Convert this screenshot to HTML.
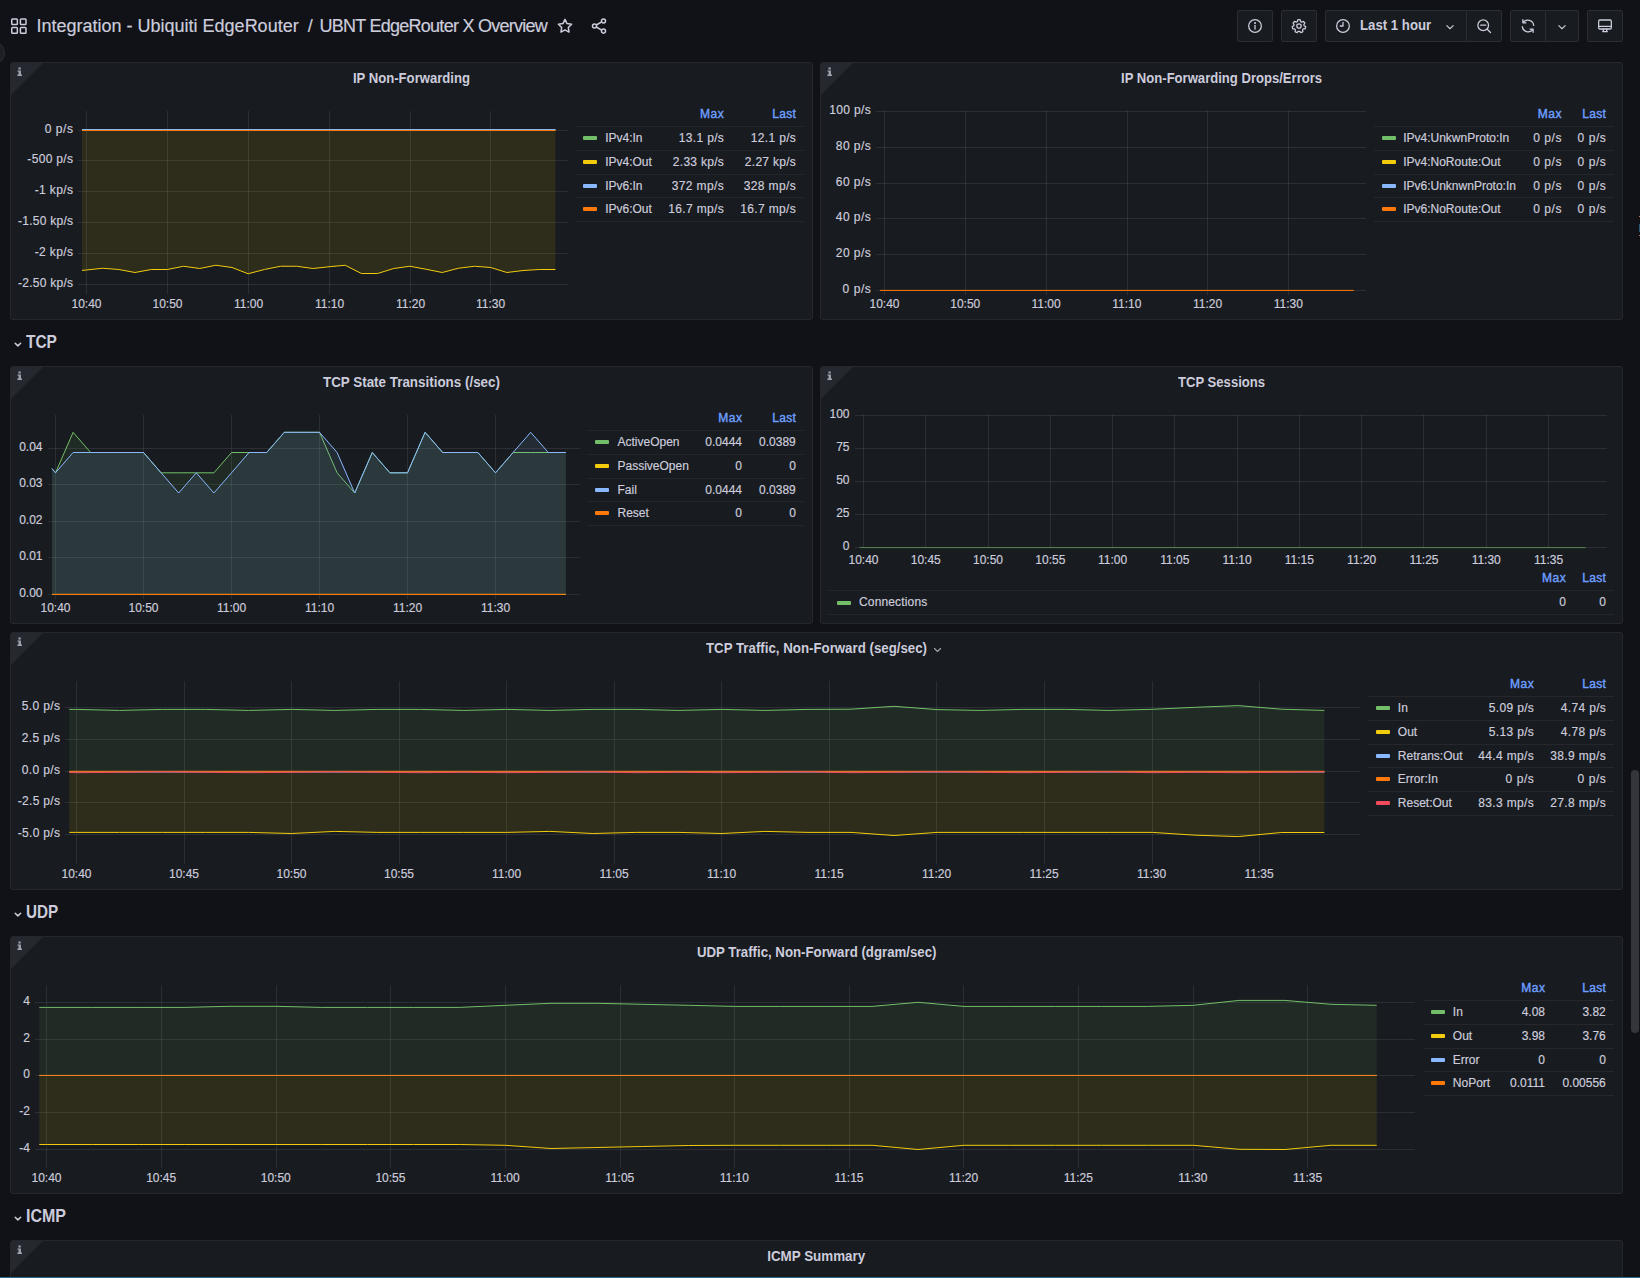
<!DOCTYPE html>
<html lang="en"><head><meta charset="utf-8"><title>UBNT EdgeRouter X Overview - Grafana</title>
<style>
html,body{margin:0;padding:0}
body{width:1640px;height:1278px;overflow:hidden;position:relative;background:#111217;font-family:"Liberation Sans",sans-serif;color:#ccccdc}
.t{position:absolute;white-space:nowrap;-webkit-text-stroke:0.18px currentColor}
.p{position:absolute;background:#181b1f;border:1px solid #25272c;border-radius:3px;overflow:hidden}
.c{position:absolute;left:0;top:0;width:0;height:0;border-top:32px solid #25282f;border-right:32px solid transparent}
.ii{position:absolute;left:5.5px;top:4px}
.hl{position:absolute;height:1px;background:#25272c}
.sw{position:absolute;width:14px;height:4px;border-radius:1px}
.g{position:absolute;left:0;top:0;pointer-events:none}
.b{position:absolute;top:10px;height:30px;background:#181b1f;border:1px solid #2a2d33;border-radius:2px}
.ic{position:absolute}
</style></head><body>

<div style="position:absolute;left:-19px;top:41px;width:22px;height:22px;border-radius:50%;background:#1b1e24;border:1px solid #2a2d33"></div>
<svg class="ic" style="left:10px;top:17px" width="18" height="18" viewBox="0 0 18 18" fill="none" stroke="#ccccdc" stroke-width="1.5"><rect x="1.75" y="2" width="5.6" height="5.6" rx="0.8"/><rect x="10.4" y="2" width="5.6" height="5.6" rx="0.8"/><rect x="1.75" y="10.6" width="5.6" height="5.6" rx="0.8"/><rect x="10.4" y="10.6" width="5.6" height="5.6" rx="0.8"/></svg>
<div class="t" style="left:36.50px;top:13.10px;font-size:18px;line-height:27px;color:#ccccdc;">Integration - Ubiquiti EdgeRouter</div>
<div class="t" style="left:307.80px;top:13.10px;font-size:18px;line-height:27px;color:#ccccdc;">/</div>
<div class="t" style="left:319.50px;top:13.10px;font-size:18px;line-height:27px;color:#ccccdc;letter-spacing:-0.739px;">UBNT EdgeRouter X Overview</div>
<svg class="ic" style="left:556px;top:17px" width="18" height="18" viewBox="0 0 24 24" fill="none" stroke="#ccccdc" stroke-width="2" stroke-linejoin="round"><path d="M12 3.2l2.7 5.6 6.1.9-4.4 4.3 1 6.1L12 17.2l-5.4 2.9 1-6.1L3.2 9.7l6.1-.9z"/></svg>
<svg class="ic" style="left:590px;top:17px" width="18" height="18" viewBox="0 0 24 24" fill="none" stroke="#ccccdc" stroke-width="2"><circle cx="18" cy="5.2" r="2.7"/><circle cx="6" cy="12" r="2.7"/><circle cx="18" cy="18.8" r="2.7"/><path d="M8.4 10.7l7.2-4.1M8.4 13.3l7.2 4.1"/></svg>
<div class="b" style="left:1237px;width:34px;border-radius:2px 2px 2px 2px"></div>
<div class="b" style="left:1281px;width:34px;border-radius:2px 2px 2px 2px"></div>
<div class="b" style="left:1325px;width:140px;border-radius:2px 0 0 2px"></div>
<div class="b" style="left:1466px;width:34px;border-radius:0 2px 2px 0"></div>
<div class="b" style="left:1510px;width:34px;border-radius:2px 0 0 2px"></div>
<div class="b" style="left:1545px;width:32px;border-radius:0 2px 2px 0"></div>
<div class="b" style="left:1587px;width:34px;border-radius:2px 2px 2px 2px"></div>
<svg class="ic" style="left:1247px;top:18px" width="16" height="16" viewBox="0 0 24 24" fill="none" stroke="#ccccdc" stroke-width="1.9" stroke-linecap="round" stroke-linejoin="round"><circle cx="12" cy="12" r="9.5"/><path d="M12 11.2v5.6"/><circle cx="12" cy="7.6" r="0.6" fill="#ccccdc"/></svg>
<svg class="ic" style="left:1291px;top:18px" width="16" height="16" viewBox="0 0 24 24" fill="none" stroke="#ccccdc" stroke-width="1.9" stroke-linecap="round" stroke-linejoin="round"><circle cx="12" cy="12" r="3.3"/><path d="M10.3 2.6h3.4l.6 2.7 1.7.9 2.5-1.2 2.3 2.5-1.5 2.3.4 1.9 2.4 1.3-.8 3.3-2.8.1-1.2 1.5.5 2.7-3.1 1.4-1.8-2.1h-1.9l-1.8 2.1-3.1-1.4.5-2.7-1.2-1.5-2.8-.1-.8-3.3 2.4-1.3.4-1.9-1.5-2.3 2.3-2.5 2.5 1.2 1.7-.9z"/></svg>
<svg class="ic" style="left:1335px;top:18px" width="16" height="16" viewBox="0 0 24 24" fill="none" stroke="#ccccdc" stroke-width="1.9" stroke-linecap="round" stroke-linejoin="round"><circle cx="12" cy="12" r="9.5"/><path d="M12 6.5V12H7.8"/></svg>
<div class="t" style="left:1360.30px;top:15.30px;font-size:14px;line-height:21px;color:#ccccdc;font-weight:700;-webkit-text-stroke:0;transform:scaleX(0.9436);transform-origin:0 50%;">Last 1 hour</div>
<svg class="ic" style="left:1443px;top:20px" width="14" height="14" viewBox="0 0 24 24" fill="none" stroke="#ccccdc" stroke-width="1.9" stroke-linecap="round" stroke-linejoin="round"><path d="M6.5 9.5l5.5 5.5 5.5-5.5"/></svg>
<svg class="ic" style="left:1476px;top:18px" width="16" height="16" viewBox="0 0 24 24" fill="none" stroke="#ccccdc" stroke-width="1.9" stroke-linecap="round" stroke-linejoin="round"><circle cx="10.8" cy="10.8" r="8"/><path d="M16.8 16.8l5 5M7 10.8h7.6"/></svg>
<svg class="ic" style="left:1520px;top:18px" width="16" height="16" viewBox="0 0 24 24" fill="none" stroke="#ccccdc" stroke-width="1.9" stroke-linecap="round" stroke-linejoin="round"><path d="M20.5 11a8.7 8.7 0 0 0-15.6-4.3M4.3 2.6v4.6h4.6M3.5 13a8.7 8.7 0 0 0 15.6 4.3M19.7 21.4v-4.6h-4.6"/></svg>
<svg class="ic" style="left:1555px;top:20px" width="14" height="14" viewBox="0 0 24 24" fill="none" stroke="#ccccdc" stroke-width="1.9" stroke-linecap="round" stroke-linejoin="round"><path d="M6.5 9.5l5.5 5.5 5.5-5.5"/></svg>
<svg class="ic" style="left:1597px;top:18px" width="16" height="16" viewBox="0 0 24 24" fill="none" stroke="#ccccdc" stroke-width="1.9" stroke-linecap="round" stroke-linejoin="round"><rect x="2.5" y="3" width="19" height="13.5" rx="2"/><path d="M2.5 12.5h19M8.5 20.5h7M9.5 16.5v4M14.5 16.5v4"/></svg>
<div class="p" style="left:10px;top:62px;width:801px;height:256px"><i class="c"></i><svg class="ii" width="5.4" height="9.4" viewBox="0 0 6 10"><path d="M1.6 0.2h2.6v2.3H1.6zM0.6 3.6h3.8v4.6h1.2v1.6H0.4V8.2h1.3V5.1H0.6z" fill="#9fa1ae"/></svg></div>
<div class="p" style="left:820px;top:62px;width:801px;height:256px"><i class="c"></i><svg class="ii" width="5.4" height="9.4" viewBox="0 0 6 10"><path d="M1.6 0.2h2.6v2.3H1.6zM0.6 3.6h3.8v4.6h1.2v1.6H0.4V8.2h1.3V5.1H0.6z" fill="#9fa1ae"/></svg></div>
<div class="p" style="left:10px;top:366px;width:801px;height:256px"><i class="c"></i><svg class="ii" width="5.4" height="9.4" viewBox="0 0 6 10"><path d="M1.6 0.2h2.6v2.3H1.6zM0.6 3.6h3.8v4.6h1.2v1.6H0.4V8.2h1.3V5.1H0.6z" fill="#9fa1ae"/></svg></div>
<div class="p" style="left:820px;top:366px;width:801px;height:256px"><i class="c"></i><svg class="ii" width="5.4" height="9.4" viewBox="0 0 6 10"><path d="M1.6 0.2h2.6v2.3H1.6zM0.6 3.6h3.8v4.6h1.2v1.6H0.4V8.2h1.3V5.1H0.6z" fill="#9fa1ae"/></svg></div>
<div class="p" style="left:10px;top:632px;width:1611px;height:256px"><i class="c"></i><svg class="ii" width="5.4" height="9.4" viewBox="0 0 6 10"><path d="M1.6 0.2h2.6v2.3H1.6zM0.6 3.6h3.8v4.6h1.2v1.6H0.4V8.2h1.3V5.1H0.6z" fill="#9fa1ae"/></svg></div>
<div class="p" style="left:10px;top:936px;width:1611px;height:256px"><i class="c"></i><svg class="ii" width="5.4" height="9.4" viewBox="0 0 6 10"><path d="M1.6 0.2h2.6v2.3H1.6zM0.6 3.6h3.8v4.6h1.2v1.6H0.4V8.2h1.3V5.1H0.6z" fill="#9fa1ae"/></svg></div>
<div class="p" style="left:10px;top:1240px;width:1611px;height:58px"><i class="c"></i><svg class="ii" width="5.4" height="9.4" viewBox="0 0 6 10"><path d="M1.6 0.2h2.6v2.3H1.6zM0.6 3.6h3.8v4.6h1.2v1.6H0.4V8.2h1.3V5.1H0.6z" fill="#9fa1ae"/></svg></div>
<svg class="ic" style="left:12px;top:337.5px" width="12" height="12" viewBox="0 0 12 12" fill="none" stroke="#ccccdc" stroke-width="1.5" stroke-linecap="round" stroke-linejoin="round"><path d="M3.2 5.2l2.7 2.7 2.7-2.7"/></svg>
<div class="t" style="left:26.20px;top:328.90px;font-size:18px;line-height:27px;color:#ccccdc;font-weight:700;-webkit-text-stroke:0;transform:scaleX(0.8583);transform-origin:0 50%;">TCP</div>
<svg class="ic" style="left:12px;top:907.5px" width="12" height="12" viewBox="0 0 12 12" fill="none" stroke="#ccccdc" stroke-width="1.5" stroke-linecap="round" stroke-linejoin="round"><path d="M3.2 5.2l2.7 2.7 2.7-2.7"/></svg>
<div class="t" style="left:26.20px;top:898.90px;font-size:18px;line-height:27px;color:#ccccdc;font-weight:700;-webkit-text-stroke:0;transform:scaleX(0.8447);transform-origin:0 50%;">UDP</div>
<svg class="ic" style="left:12px;top:1211.7px" width="12" height="12" viewBox="0 0 12 12" fill="none" stroke="#ccccdc" stroke-width="1.5" stroke-linecap="round" stroke-linejoin="round"><path d="M3.2 5.2l2.7 2.7 2.7-2.7"/></svg>
<div class="t" style="left:26.20px;top:1203.10px;font-size:18px;line-height:27px;color:#ccccdc;font-weight:700;-webkit-text-stroke:0;transform:scaleX(0.8889);transform-origin:0 50%;">ICMP</div>
<div class="t" style="left:349.02px;top:67.50px;font-size:14px;line-height:21px;color:#ccccdc;font-weight:700;-webkit-text-stroke:0;transform:scaleX(0.9363);transform-origin:50% 50%;">IP Non-Forwarding</div>
<div class="t" style="left:1113.90px;top:67.50px;font-size:14px;line-height:21px;color:#ccccdc;font-weight:700;-webkit-text-stroke:0;transform:scaleX(0.9340);transform-origin:50% 50%;">IP Non-Forwarding Drops/Errors</div>
<div class="t" style="left:319.05px;top:371.50px;font-size:14px;line-height:21px;color:#ccccdc;font-weight:700;-webkit-text-stroke:0;transform:scaleX(0.9573);transform-origin:50% 50%;">TCP State Transitions (/sec)</div>
<div class="t" style="left:1174.95px;top:371.50px;font-size:14px;line-height:21px;color:#ccccdc;font-weight:700;-webkit-text-stroke:0;transform:scaleX(0.9344);transform-origin:50% 50%;">TCP Sessions</div>
<div class="t" style="left:706.20px;top:637.50px;font-size:14px;line-height:21px;color:#ccccdc;font-weight:700;-webkit-text-stroke:0;transform:scaleX(0.9480);transform-origin:0 50%;">TCP Traffic, Non-Forward (seg/sec)</div>
<svg class="ic" style="left:931px;top:644px" width="12" height="12" viewBox="0 0 12 12" fill="none" stroke="#a3a4b0" stroke-width="1.1" stroke-linecap="round" stroke-linejoin="round"><path d="M3.5 4.5l3 3 3-3"/></svg>
<div class="t" style="left:689.83px;top:941.50px;font-size:14px;line-height:21px;color:#ccccdc;font-weight:700;-webkit-text-stroke:0;transform:scaleX(0.9454);transform-origin:50% 50%;">UDP Traffic, Non-Forward (dgram/sec)</div>
<div class="t" style="left:764.78px;top:1245.50px;font-size:14px;line-height:21px;color:#ccccdc;font-weight:700;-webkit-text-stroke:0;transform:scaleX(0.9566);transform-origin:50% 50%;">ICMP Summary</div>
<div class="t" style="left:71.49px;top:294.50px;font-size:12px;line-height:18px;color:#ccccdc;">10:40</div>
<div class="t" style="left:152.49px;top:294.50px;font-size:12px;line-height:18px;color:#ccccdc;">10:50</div>
<div class="t" style="left:233.93px;top:294.50px;font-size:12px;line-height:18px;color:#ccccdc;">11:00</div>
<div class="t" style="left:314.93px;top:294.50px;font-size:12px;line-height:18px;color:#ccccdc;">11:10</div>
<div class="t" style="left:395.93px;top:294.50px;font-size:12px;line-height:18px;color:#ccccdc;">11:20</div>
<div class="t" style="left:475.93px;top:294.50px;font-size:12px;line-height:18px;color:#ccccdc;">11:30</div>
<div class="t" style="left:44.68px;top:120.00px;font-size:12px;line-height:18px;color:#ccccdc;letter-spacing:0.575px;">0 p/s</div>
<div class="t" style="left:27.34px;top:150.00px;font-size:12px;line-height:18px;color:#ccccdc;letter-spacing:0.329px;">-500 p/s</div>
<div class="t" style="left:34.69px;top:181.00px;font-size:12px;line-height:18px;color:#ccccdc;letter-spacing:0.383px;">-1 kp/s</div>
<div class="t" style="left:18.01px;top:212.00px;font-size:12px;line-height:18px;color:#ccccdc;letter-spacing:0.256px;">-1.50 kp/s</div>
<div class="t" style="left:34.69px;top:243.00px;font-size:12px;line-height:18px;color:#ccccdc;letter-spacing:0.383px;">-2 kp/s</div>
<div class="t" style="left:18.01px;top:274.00px;font-size:12px;line-height:18px;color:#ccccdc;letter-spacing:0.256px;">-2.50 kp/s</div>
<div class="t" style="left:700.10px;top:105.00px;font-size:12px;line-height:18px;color:#6e9fff;letter-spacing:0.515px;-webkit-text-stroke:0.4px currentColor;">Max</div>
<div class="t" style="left:772.30px;top:105.00px;font-size:12px;line-height:18px;color:#6e9fff;letter-spacing:0.273px;-webkit-text-stroke:0.4px currentColor;">Last</div>
<div class="hl" style="left:575px;top:126px;width:229px"></div>
<div class="hl" style="left:575px;top:150px;width:229px"></div>
<div class="hl" style="left:575px;top:174px;width:229px"></div>
<div class="hl" style="left:575px;top:197px;width:229px"></div>
<div class="hl" style="left:575px;top:221px;width:229px"></div>
<div class="sw" style="left:583px;top:136.00px;background:#73bf69"></div>
<div class="t" style="left:605.20px;top:128.75px;font-size:12px;line-height:18px;color:#ccccdc;">IPv4:In</div>
<div class="t" style="left:678.80px;top:128.75px;font-size:12px;line-height:18px;color:#ccccdc;letter-spacing:0.329px;">13.1 p/s</div>
<div class="t" style="left:750.80px;top:128.75px;font-size:12px;line-height:18px;color:#ccccdc;letter-spacing:0.329px;">12.1 p/s</div>
<div class="sw" style="left:583px;top:160.00px;background:#f2cc0c"></div>
<div class="t" style="left:605.20px;top:152.75px;font-size:12px;line-height:18px;color:#ccccdc;">IPv4:Out</div>
<div class="t" style="left:672.80px;top:152.75px;font-size:12px;line-height:18px;color:#ccccdc;letter-spacing:0.287px;">2.33 kp/s</div>
<div class="t" style="left:744.80px;top:152.75px;font-size:12px;line-height:18px;color:#ccccdc;letter-spacing:0.287px;">2.27 kp/s</div>
<div class="sw" style="left:583px;top:184.00px;background:#8ab8ff"></div>
<div class="t" style="left:605.20px;top:176.75px;font-size:12px;line-height:18px;color:#ccccdc;">IPv6:In</div>
<div class="t" style="left:671.64px;top:176.75px;font-size:12px;line-height:18px;color:#ccccdc;letter-spacing:0.400px;">372 mp/s</div>
<div class="t" style="left:743.64px;top:176.75px;font-size:12px;line-height:18px;color:#ccccdc;letter-spacing:0.400px;">328 mp/s</div>
<div class="sw" style="left:583px;top:207.00px;background:#ff780a"></div>
<div class="t" style="left:605.20px;top:199.75px;font-size:12px;line-height:18px;color:#ccccdc;">IPv6:Out</div>
<div class="t" style="left:668.31px;top:199.75px;font-size:12px;line-height:18px;color:#ccccdc;letter-spacing:0.350px;">16.7 mp/s</div>
<div class="t" style="left:740.31px;top:199.75px;font-size:12px;line-height:18px;color:#ccccdc;letter-spacing:0.350px;">16.7 mp/s</div>
<div class="t" style="left:869.49px;top:294.50px;font-size:12px;line-height:18px;color:#ccccdc;">10:40</div>
<div class="t" style="left:950.24px;top:294.50px;font-size:12px;line-height:18px;color:#ccccdc;">10:50</div>
<div class="t" style="left:1031.43px;top:294.50px;font-size:12px;line-height:18px;color:#ccccdc;">11:00</div>
<div class="t" style="left:1112.18px;top:294.50px;font-size:12px;line-height:18px;color:#ccccdc;">11:10</div>
<div class="t" style="left:1192.93px;top:294.50px;font-size:12px;line-height:18px;color:#ccccdc;">11:20</div>
<div class="t" style="left:1273.68px;top:294.50px;font-size:12px;line-height:18px;color:#ccccdc;">11:30</div>
<div class="t" style="left:829.14px;top:101.00px;font-size:12px;line-height:18px;color:#ccccdc;letter-spacing:0.383px;">100 p/s</div>
<div class="t" style="left:835.81px;top:137.00px;font-size:12px;line-height:18px;color:#ccccdc;letter-spacing:0.460px;">80 p/s</div>
<div class="t" style="left:835.81px;top:173.00px;font-size:12px;line-height:18px;color:#ccccdc;letter-spacing:0.460px;">60 p/s</div>
<div class="t" style="left:835.81px;top:208.00px;font-size:12px;line-height:18px;color:#ccccdc;letter-spacing:0.460px;">40 p/s</div>
<div class="t" style="left:835.81px;top:244.00px;font-size:12px;line-height:18px;color:#ccccdc;letter-spacing:0.460px;">20 p/s</div>
<div class="t" style="left:842.48px;top:280.00px;font-size:12px;line-height:18px;color:#ccccdc;letter-spacing:0.575px;">0 p/s</div>
<div class="t" style="left:1537.80px;top:105.00px;font-size:12px;line-height:18px;color:#6e9fff;letter-spacing:0.515px;-webkit-text-stroke:0.4px currentColor;">Max</div>
<div class="t" style="left:1582.30px;top:105.00px;font-size:12px;line-height:18px;color:#6e9fff;letter-spacing:0.273px;-webkit-text-stroke:0.4px currentColor;">Last</div>
<div class="hl" style="left:1374px;top:126px;width:240px"></div>
<div class="hl" style="left:1374px;top:150px;width:240px"></div>
<div class="hl" style="left:1374px;top:174px;width:240px"></div>
<div class="hl" style="left:1374px;top:197px;width:240px"></div>
<div class="hl" style="left:1374px;top:221px;width:240px"></div>
<div class="sw" style="left:1382px;top:136.00px;background:#73bf69"></div>
<div class="t" style="left:1403.20px;top:128.75px;font-size:12px;line-height:18px;color:#ccccdc;">IPv4:UnkwnProto:In</div>
<div class="t" style="left:1533.18px;top:128.75px;font-size:12px;line-height:18px;color:#ccccdc;letter-spacing:0.575px;">0 p/s</div>
<div class="t" style="left:1577.48px;top:128.75px;font-size:12px;line-height:18px;color:#ccccdc;letter-spacing:0.575px;">0 p/s</div>
<div class="sw" style="left:1382px;top:160.00px;background:#f2cc0c"></div>
<div class="t" style="left:1403.20px;top:152.75px;font-size:12px;line-height:18px;color:#ccccdc;">IPv4:NoRoute:Out</div>
<div class="t" style="left:1533.18px;top:152.75px;font-size:12px;line-height:18px;color:#ccccdc;letter-spacing:0.575px;">0 p/s</div>
<div class="t" style="left:1577.48px;top:152.75px;font-size:12px;line-height:18px;color:#ccccdc;letter-spacing:0.575px;">0 p/s</div>
<div class="sw" style="left:1382px;top:184.00px;background:#8ab8ff"></div>
<div class="t" style="left:1403.20px;top:176.75px;font-size:12px;line-height:18px;color:#ccccdc;">IPv6:UnknwnProto:In</div>
<div class="t" style="left:1533.18px;top:176.75px;font-size:12px;line-height:18px;color:#ccccdc;letter-spacing:0.575px;">0 p/s</div>
<div class="t" style="left:1577.48px;top:176.75px;font-size:12px;line-height:18px;color:#ccccdc;letter-spacing:0.575px;">0 p/s</div>
<div class="sw" style="left:1382px;top:207.00px;background:#ff780a"></div>
<div class="t" style="left:1403.20px;top:199.75px;font-size:12px;line-height:18px;color:#ccccdc;">IPv6:NoRoute:Out</div>
<div class="t" style="left:1533.18px;top:199.75px;font-size:12px;line-height:18px;color:#ccccdc;letter-spacing:0.575px;">0 p/s</div>
<div class="t" style="left:1577.48px;top:199.75px;font-size:12px;line-height:18px;color:#ccccdc;letter-spacing:0.575px;">0 p/s</div>
<div class="t" style="left:40.49px;top:598.80px;font-size:12px;line-height:18px;color:#ccccdc;">10:40</div>
<div class="t" style="left:128.49px;top:598.80px;font-size:12px;line-height:18px;color:#ccccdc;">10:50</div>
<div class="t" style="left:216.93px;top:598.80px;font-size:12px;line-height:18px;color:#ccccdc;">11:00</div>
<div class="t" style="left:304.93px;top:598.80px;font-size:12px;line-height:18px;color:#ccccdc;">11:10</div>
<div class="t" style="left:392.93px;top:598.80px;font-size:12px;line-height:18px;color:#ccccdc;">11:20</div>
<div class="t" style="left:480.93px;top:598.80px;font-size:12px;line-height:18px;color:#ccccdc;">11:30</div>
<div class="t" style="left:19.15px;top:438.00px;font-size:12px;line-height:18px;color:#ccccdc;">0.04</div>
<div class="t" style="left:19.15px;top:474.00px;font-size:12px;line-height:18px;color:#ccccdc;">0.03</div>
<div class="t" style="left:19.15px;top:511.00px;font-size:12px;line-height:18px;color:#ccccdc;">0.02</div>
<div class="t" style="left:19.15px;top:547.00px;font-size:12px;line-height:18px;color:#ccccdc;">0.01</div>
<div class="t" style="left:19.15px;top:584.00px;font-size:12px;line-height:18px;color:#ccccdc;">0.00</div>
<div class="t" style="left:718.30px;top:409.00px;font-size:12px;line-height:18px;color:#6e9fff;letter-spacing:0.515px;-webkit-text-stroke:0.4px currentColor;">Max</div>
<div class="t" style="left:772.30px;top:409.00px;font-size:12px;line-height:18px;color:#6e9fff;letter-spacing:0.273px;-webkit-text-stroke:0.4px currentColor;">Last</div>
<div class="hl" style="left:587px;top:430px;width:217px"></div>
<div class="hl" style="left:587px;top:454px;width:217px"></div>
<div class="hl" style="left:587px;top:478px;width:217px"></div>
<div class="hl" style="left:587px;top:501px;width:217px"></div>
<div class="hl" style="left:587px;top:525px;width:217px"></div>
<div class="sw" style="left:595px;top:440.00px;background:#73bf69"></div>
<div class="t" style="left:617.50px;top:432.75px;font-size:12px;line-height:18px;color:#ccccdc;">ActiveOpen</div>
<div class="t" style="left:705.30px;top:432.75px;font-size:12px;line-height:18px;color:#ccccdc;">0.0444</div>
<div class="t" style="left:759.10px;top:432.75px;font-size:12px;line-height:18px;color:#ccccdc;">0.0389</div>
<div class="sw" style="left:595px;top:464.00px;background:#f2cc0c"></div>
<div class="t" style="left:617.50px;top:456.75px;font-size:12px;line-height:18px;color:#ccccdc;">PassiveOpen</div>
<div class="t" style="left:735.33px;top:456.75px;font-size:12px;line-height:18px;color:#ccccdc;">0</div>
<div class="t" style="left:789.13px;top:456.75px;font-size:12px;line-height:18px;color:#ccccdc;">0</div>
<div class="sw" style="left:595px;top:488.00px;background:#8ab8ff"></div>
<div class="t" style="left:617.50px;top:480.75px;font-size:12px;line-height:18px;color:#ccccdc;">Fail</div>
<div class="t" style="left:705.30px;top:480.75px;font-size:12px;line-height:18px;color:#ccccdc;">0.0444</div>
<div class="t" style="left:759.10px;top:480.75px;font-size:12px;line-height:18px;color:#ccccdc;">0.0389</div>
<div class="sw" style="left:595px;top:511.00px;background:#ff780a"></div>
<div class="t" style="left:617.50px;top:503.75px;font-size:12px;line-height:18px;color:#ccccdc;">Reset</div>
<div class="t" style="left:735.33px;top:503.75px;font-size:12px;line-height:18px;color:#ccccdc;">0</div>
<div class="t" style="left:789.13px;top:503.75px;font-size:12px;line-height:18px;color:#ccccdc;">0</div>
<div class="t" style="left:848.49px;top:551.00px;font-size:12px;line-height:18px;color:#ccccdc;">10:40</div>
<div class="t" style="left:910.76px;top:551.00px;font-size:12px;line-height:18px;color:#ccccdc;">10:45</div>
<div class="t" style="left:973.03px;top:551.00px;font-size:12px;line-height:18px;color:#ccccdc;">10:50</div>
<div class="t" style="left:1035.30px;top:551.00px;font-size:12px;line-height:18px;color:#ccccdc;">10:55</div>
<div class="t" style="left:1098.02px;top:551.00px;font-size:12px;line-height:18px;color:#ccccdc;">11:00</div>
<div class="t" style="left:1160.29px;top:551.00px;font-size:12px;line-height:18px;color:#ccccdc;">11:05</div>
<div class="t" style="left:1222.57px;top:551.00px;font-size:12px;line-height:18px;color:#ccccdc;">11:10</div>
<div class="t" style="left:1284.84px;top:551.00px;font-size:12px;line-height:18px;color:#ccccdc;">11:15</div>
<div class="t" style="left:1347.11px;top:551.00px;font-size:12px;line-height:18px;color:#ccccdc;">11:20</div>
<div class="t" style="left:1409.39px;top:551.00px;font-size:12px;line-height:18px;color:#ccccdc;">11:25</div>
<div class="t" style="left:1471.66px;top:551.00px;font-size:12px;line-height:18px;color:#ccccdc;">11:30</div>
<div class="t" style="left:1533.93px;top:551.00px;font-size:12px;line-height:18px;color:#ccccdc;">11:35</div>
<div class="t" style="left:829.48px;top:405.25px;font-size:12px;line-height:18px;color:#ccccdc;">100</div>
<div class="t" style="left:836.15px;top:438.25px;font-size:12px;line-height:18px;color:#ccccdc;">75</div>
<div class="t" style="left:836.15px;top:471.25px;font-size:12px;line-height:18px;color:#ccccdc;">50</div>
<div class="t" style="left:836.15px;top:504.25px;font-size:12px;line-height:18px;color:#ccccdc;">25</div>
<div class="t" style="left:842.83px;top:537.25px;font-size:12px;line-height:18px;color:#ccccdc;">0</div>
<div class="t" style="left:1542.10px;top:568.50px;font-size:12px;line-height:18px;color:#6e9fff;letter-spacing:0.515px;-webkit-text-stroke:0.4px currentColor;">Max</div>
<div class="t" style="left:1582.30px;top:568.50px;font-size:12px;line-height:18px;color:#6e9fff;letter-spacing:0.273px;-webkit-text-stroke:0.4px currentColor;">Last</div>
<div class="hl" style="left:829px;top:590px;width:785px"></div><div class="hl" style="left:829px;top:614px;width:785px"></div>
<div class="sw" style="left:837px;top:600.5px;background:#73bf69"></div>
<div class="t" style="left:859.00px;top:592.80px;font-size:12px;line-height:18px;color:#ccccdc;letter-spacing:0.149px;">Connections</div>
<div class="t" style="left:1559.13px;top:592.80px;font-size:12px;line-height:18px;color:#ccccdc;">0</div>
<div class="t" style="left:1599.13px;top:592.80px;font-size:12px;line-height:18px;color:#ccccdc;">0</div>
<div class="t" style="left:61.49px;top:864.70px;font-size:12px;line-height:18px;color:#ccccdc;">10:40</div>
<div class="t" style="left:168.99px;top:864.70px;font-size:12px;line-height:18px;color:#ccccdc;">10:45</div>
<div class="t" style="left:276.49px;top:864.70px;font-size:12px;line-height:18px;color:#ccccdc;">10:50</div>
<div class="t" style="left:383.99px;top:864.70px;font-size:12px;line-height:18px;color:#ccccdc;">10:55</div>
<div class="t" style="left:491.93px;top:864.70px;font-size:12px;line-height:18px;color:#ccccdc;">11:00</div>
<div class="t" style="left:599.43px;top:864.70px;font-size:12px;line-height:18px;color:#ccccdc;">11:05</div>
<div class="t" style="left:706.93px;top:864.70px;font-size:12px;line-height:18px;color:#ccccdc;">11:10</div>
<div class="t" style="left:814.43px;top:864.70px;font-size:12px;line-height:18px;color:#ccccdc;">11:15</div>
<div class="t" style="left:921.93px;top:864.70px;font-size:12px;line-height:18px;color:#ccccdc;">11:20</div>
<div class="t" style="left:1029.43px;top:864.70px;font-size:12px;line-height:18px;color:#ccccdc;">11:25</div>
<div class="t" style="left:1136.93px;top:864.70px;font-size:12px;line-height:18px;color:#ccccdc;">11:30</div>
<div class="t" style="left:1244.43px;top:864.70px;font-size:12px;line-height:18px;color:#ccccdc;">11:35</div>
<div class="t" style="left:21.68px;top:697.00px;font-size:12px;line-height:18px;color:#ccccdc;letter-spacing:0.383px;">5.0 p/s</div>
<div class="t" style="left:21.68px;top:729.00px;font-size:12px;line-height:18px;color:#ccccdc;letter-spacing:0.383px;">2.5 p/s</div>
<div class="t" style="left:21.68px;top:761.00px;font-size:12px;line-height:18px;color:#ccccdc;letter-spacing:0.383px;">0.0 p/s</div>
<div class="t" style="left:17.68px;top:792.00px;font-size:12px;line-height:18px;color:#ccccdc;letter-spacing:0.329px;">-2.5 p/s</div>
<div class="t" style="left:17.68px;top:824.00px;font-size:12px;line-height:18px;color:#ccccdc;letter-spacing:0.329px;">-5.0 p/s</div>
<div class="t" style="left:1510.10px;top:675.00px;font-size:12px;line-height:18px;color:#6e9fff;letter-spacing:0.515px;-webkit-text-stroke:0.4px currentColor;">Max</div>
<div class="t" style="left:1582.30px;top:675.00px;font-size:12px;line-height:18px;color:#6e9fff;letter-spacing:0.273px;-webkit-text-stroke:0.4px currentColor;">Last</div>
<div class="hl" style="left:1368px;top:696px;width:246px"></div>
<div class="hl" style="left:1368px;top:720px;width:246px"></div>
<div class="hl" style="left:1368px;top:744px;width:246px"></div>
<div class="hl" style="left:1368px;top:767px;width:246px"></div>
<div class="hl" style="left:1368px;top:791px;width:246px"></div>
<div class="hl" style="left:1368px;top:815px;width:246px"></div>
<div class="sw" style="left:1376px;top:706.00px;background:#73bf69"></div>
<div class="t" style="left:1397.80px;top:698.75px;font-size:12px;line-height:18px;color:#ccccdc;">In</div>
<div class="t" style="left:1488.80px;top:698.75px;font-size:12px;line-height:18px;color:#ccccdc;letter-spacing:0.329px;">5.09 p/s</div>
<div class="t" style="left:1560.80px;top:698.75px;font-size:12px;line-height:18px;color:#ccccdc;letter-spacing:0.329px;">4.74 p/s</div>
<div class="sw" style="left:1376px;top:730.00px;background:#f2cc0c"></div>
<div class="t" style="left:1397.80px;top:722.75px;font-size:12px;line-height:18px;color:#ccccdc;">Out</div>
<div class="t" style="left:1488.80px;top:722.75px;font-size:12px;line-height:18px;color:#ccccdc;letter-spacing:0.329px;">5.13 p/s</div>
<div class="t" style="left:1560.80px;top:722.75px;font-size:12px;line-height:18px;color:#ccccdc;letter-spacing:0.329px;">4.78 p/s</div>
<div class="sw" style="left:1376px;top:754.00px;background:#8ab8ff"></div>
<div class="t" style="left:1397.80px;top:746.75px;font-size:12px;line-height:18px;color:#ccccdc;">Retrans:Out</div>
<div class="t" style="left:1478.31px;top:746.75px;font-size:12px;line-height:18px;color:#ccccdc;letter-spacing:0.350px;">44.4 mp/s</div>
<div class="t" style="left:1550.31px;top:746.75px;font-size:12px;line-height:18px;color:#ccccdc;letter-spacing:0.350px;">38.9 mp/s</div>
<div class="sw" style="left:1376px;top:777.00px;background:#ff780a"></div>
<div class="t" style="left:1397.80px;top:769.75px;font-size:12px;line-height:18px;color:#ccccdc;">Error:In</div>
<div class="t" style="left:1505.48px;top:769.75px;font-size:12px;line-height:18px;color:#ccccdc;letter-spacing:0.575px;">0 p/s</div>
<div class="t" style="left:1577.48px;top:769.75px;font-size:12px;line-height:18px;color:#ccccdc;letter-spacing:0.575px;">0 p/s</div>
<div class="sw" style="left:1376px;top:801.00px;background:#f2495c"></div>
<div class="t" style="left:1397.80px;top:793.75px;font-size:12px;line-height:18px;color:#ccccdc;">Reset:Out</div>
<div class="t" style="left:1478.31px;top:793.75px;font-size:12px;line-height:18px;color:#ccccdc;letter-spacing:0.350px;">83.3 mp/s</div>
<div class="t" style="left:1550.31px;top:793.75px;font-size:12px;line-height:18px;color:#ccccdc;letter-spacing:0.350px;">27.8 mp/s</div>
<div class="t" style="left:31.49px;top:1169.00px;font-size:12px;line-height:18px;color:#ccccdc;">10:40</div>
<div class="t" style="left:146.13px;top:1169.00px;font-size:12px;line-height:18px;color:#ccccdc;">10:45</div>
<div class="t" style="left:260.77px;top:1169.00px;font-size:12px;line-height:18px;color:#ccccdc;">10:50</div>
<div class="t" style="left:375.41px;top:1169.00px;font-size:12px;line-height:18px;color:#ccccdc;">10:55</div>
<div class="t" style="left:490.49px;top:1169.00px;font-size:12px;line-height:18px;color:#ccccdc;">11:00</div>
<div class="t" style="left:605.13px;top:1169.00px;font-size:12px;line-height:18px;color:#ccccdc;">11:05</div>
<div class="t" style="left:719.77px;top:1169.00px;font-size:12px;line-height:18px;color:#ccccdc;">11:10</div>
<div class="t" style="left:834.41px;top:1169.00px;font-size:12px;line-height:18px;color:#ccccdc;">11:15</div>
<div class="t" style="left:949.05px;top:1169.00px;font-size:12px;line-height:18px;color:#ccccdc;">11:20</div>
<div class="t" style="left:1063.69px;top:1169.00px;font-size:12px;line-height:18px;color:#ccccdc;">11:25</div>
<div class="t" style="left:1178.33px;top:1169.00px;font-size:12px;line-height:18px;color:#ccccdc;">11:30</div>
<div class="t" style="left:1292.97px;top:1169.00px;font-size:12px;line-height:18px;color:#ccccdc;">11:35</div>
<div class="t" style="left:23.33px;top:992.25px;font-size:12px;line-height:18px;color:#ccccdc;">4</div>
<div class="t" style="left:23.33px;top:1029.25px;font-size:12px;line-height:18px;color:#ccccdc;">2</div>
<div class="t" style="left:23.33px;top:1065.25px;font-size:12px;line-height:18px;color:#ccccdc;">0</div>
<div class="t" style="left:19.33px;top:1102.25px;font-size:12px;line-height:18px;color:#ccccdc;">-2</div>
<div class="t" style="left:19.33px;top:1139.25px;font-size:12px;line-height:18px;color:#ccccdc;">-4</div>
<div class="t" style="left:1521.30px;top:979.00px;font-size:12px;line-height:18px;color:#6e9fff;letter-spacing:0.515px;-webkit-text-stroke:0.4px currentColor;">Max</div>
<div class="t" style="left:1582.30px;top:979.00px;font-size:12px;line-height:18px;color:#6e9fff;letter-spacing:0.273px;-webkit-text-stroke:0.4px currentColor;">Last</div>
<div class="hl" style="left:1423px;top:1000px;width:191px"></div>
<div class="hl" style="left:1423px;top:1024px;width:191px"></div>
<div class="hl" style="left:1423px;top:1048px;width:191px"></div>
<div class="hl" style="left:1423px;top:1071px;width:191px"></div>
<div class="hl" style="left:1423px;top:1095px;width:191px"></div>
<div class="sw" style="left:1431px;top:1010.00px;background:#73bf69"></div>
<div class="t" style="left:1452.80px;top:1002.75px;font-size:12px;line-height:18px;color:#ccccdc;">In</div>
<div class="t" style="left:1521.65px;top:1002.75px;font-size:12px;line-height:18px;color:#ccccdc;">4.08</div>
<div class="t" style="left:1582.45px;top:1002.75px;font-size:12px;line-height:18px;color:#ccccdc;">3.82</div>
<div class="sw" style="left:1431px;top:1034.00px;background:#f2cc0c"></div>
<div class="t" style="left:1452.80px;top:1026.75px;font-size:12px;line-height:18px;color:#ccccdc;">Out</div>
<div class="t" style="left:1521.65px;top:1026.75px;font-size:12px;line-height:18px;color:#ccccdc;">3.98</div>
<div class="t" style="left:1582.45px;top:1026.75px;font-size:12px;line-height:18px;color:#ccccdc;">3.76</div>
<div class="sw" style="left:1431px;top:1058.00px;background:#8ab8ff"></div>
<div class="t" style="left:1452.80px;top:1050.75px;font-size:12px;line-height:18px;color:#ccccdc;">Error</div>
<div class="t" style="left:1538.33px;top:1050.75px;font-size:12px;line-height:18px;color:#ccccdc;">0</div>
<div class="t" style="left:1599.13px;top:1050.75px;font-size:12px;line-height:18px;color:#ccccdc;">0</div>
<div class="sw" style="left:1431px;top:1081.00px;background:#ff780a"></div>
<div class="t" style="left:1452.80px;top:1073.75px;font-size:12px;line-height:18px;color:#ccccdc;">NoPort</div>
<div class="t" style="left:1510.08px;top:1073.75px;font-size:12px;line-height:18px;color:#ccccdc;">0.0111</div>
<div class="t" style="left:1562.42px;top:1073.75px;font-size:12px;line-height:18px;color:#ccccdc;">0.00556</div>
<svg class="g" width="1640" height="1278" viewBox="0 0 1640 1278">
<path d="M86.5 111V294M167.5 111V294M248.5 111V294M329.5 111V294M410.5 111V294M490.5 111V294" stroke="#f0faff" stroke-opacity="0.09" stroke-width="1" fill="none" shape-rendering="crispEdges"/>
<path d="M78 130.5H568M78 160.5H568M78 191.5H568M78 222.5H568M78 253.5H568M78 284.5H568" stroke="#f0faff" stroke-opacity="0.09" stroke-width="1" fill="none" shape-rendering="crispEdges"/>
<polyline points="82.00,129.70 555.50,129.70" fill="none" stroke="#73bf69" stroke-width="1" stroke-linejoin="round"/>
<polygon points="82.00,270.40 86.50,270.00 102.67,268.25 118.84,269.50 135.01,272.50 151.18,269.50 167.35,269.50 183.52,266.25 199.69,268.50 215.86,265.25 232.03,267.50 248.20,273.75 264.37,269.50 280.54,266.25 296.71,266.25 312.88,268.50 329.05,266.75 345.22,265.25 361.39,273.50 377.56,273.50 393.73,268.50 409.90,266.25 426.07,269.25 442.24,272.50 458.41,268.25 474.58,266.25 490.75,267.50 506.92,272.50 523.09,270.50 539.26,269.50 555.43,269.50 555.43,130.50 82.00,130.50" fill="#f2cc0c" fill-opacity="0.1"/>
<polyline points="82.00,270.40 86.50,270.00 102.67,268.25 118.84,269.50 135.01,272.50 151.18,269.50 167.35,269.50 183.52,266.25 199.69,268.50 215.86,265.25 232.03,267.50 248.20,273.75 264.37,269.50 280.54,266.25 296.71,266.25 312.88,268.50 329.05,266.75 345.22,265.25 361.39,273.50 377.56,273.50 393.73,268.50 409.90,266.25 426.07,269.25 442.24,272.50 458.41,268.25 474.58,266.25 490.75,267.50 506.92,272.50 523.09,270.50 539.26,269.50 555.43,269.50" fill="none" stroke="#f2cc0c" stroke-width="1" stroke-linejoin="round"/>
<polyline points="82.00,129.60 555.50,129.60" fill="none" stroke="#8ab8ff" stroke-width="1" stroke-linejoin="round"/>
<polyline points="82.00,130.50 555.50,130.50" fill="none" stroke="#ff780a" stroke-width="1" stroke-linejoin="round"/>
<path d="M884.5 111V295M965.5 111V295M1046.5 111V295M1127.5 111V295M1207.5 111V295M1288.5 111V295" stroke="#f0faff" stroke-opacity="0.09" stroke-width="1" fill="none" shape-rendering="crispEdges"/>
<path d="M876 111.5H1366M876 147.5H1366M876 183.5H1366M876 218.5H1366M876 254.5H1366M876 290.5H1366" stroke="#f0faff" stroke-opacity="0.09" stroke-width="1" fill="none" shape-rendering="crispEdges"/>
<polyline points="880.00,290.40 1353.70,290.40" fill="none" stroke="#ff780a" stroke-width="1" stroke-linejoin="round"/>
<path d="M55.5 415V599M143.5 415V599M231.5 415V599M319.5 415V599M407.5 415V599M495.5 415V599" stroke="#f0faff" stroke-opacity="0.09" stroke-width="1" fill="none" shape-rendering="crispEdges"/>
<path d="M48 448.5H580M48 484.5H580M48 521.5H580M48 557.5H580M48 594.5H580" stroke="#f0faff" stroke-opacity="0.09" stroke-width="1" fill="none" shape-rendering="crispEdges"/>
<polygon points="52.00,468.60 55.50,472.80 73.10,432.30 90.70,452.50 108.30,452.50 125.90,452.50 143.50,452.50 161.10,472.80 178.70,472.80 196.30,472.80 213.90,472.80 231.50,452.50 249.10,452.50 266.70,452.50 284.30,432.30 301.90,432.30 319.50,432.30 337.10,472.80 354.70,493.00 372.30,452.50 389.90,472.80 407.50,472.80 425.10,432.30 442.70,452.50 460.30,452.50 477.90,452.50 495.50,472.80 513.10,452.50 530.70,452.50 548.30,452.50 565.90,452.50 565.90,594.50 52.00,594.50" fill="#73bf69" fill-opacity="0.1"/>
<polyline points="52.00,468.60 55.50,472.80 73.10,432.30 90.70,452.50 108.30,452.50 125.90,452.50 143.50,452.50 161.10,472.80 178.70,472.80 196.30,472.80 213.90,472.80 231.50,452.50 249.10,452.50 266.70,452.50 284.30,432.30 301.90,432.30 319.50,432.30 337.10,472.80 354.70,493.00 372.30,452.50 389.90,472.80 407.50,472.80 425.10,432.30 442.70,452.50 460.30,452.50 477.90,452.50 495.50,472.80 513.10,452.50 530.70,452.50 548.30,452.50 565.90,452.50" fill="none" stroke="#73bf69" stroke-width="1" stroke-linejoin="round"/>
<polyline points="52.00,594.40 565.90,594.40" fill="none" stroke="#f2cc0c" stroke-width="1" stroke-linejoin="round"/>
<polygon points="52.00,468.60 55.50,472.80 73.10,452.50 90.70,452.50 108.30,452.50 125.90,452.50 143.50,452.50 161.10,472.80 178.70,493.00 196.30,472.80 213.90,493.00 231.50,472.80 249.10,452.50 266.70,452.50 284.30,432.30 301.90,432.30 319.50,432.30 337.10,452.50 354.70,493.00 372.30,452.50 389.90,472.80 407.50,472.80 425.10,432.30 442.70,452.50 460.30,452.50 477.90,452.50 495.50,472.80 513.10,452.50 530.70,432.30 548.30,452.50 565.90,452.50 565.90,594.50 52.00,594.50" fill="#8ab8ff" fill-opacity="0.1"/>
<polyline points="52.00,468.60 55.50,472.80 73.10,452.50 90.70,452.50 108.30,452.50 125.90,452.50 143.50,452.50 161.10,472.80 178.70,493.00 196.30,472.80 213.90,493.00 231.50,472.80 249.10,452.50 266.70,452.50 284.30,432.30 301.90,432.30 319.50,432.30 337.10,452.50 354.70,493.00 372.30,452.50 389.90,472.80 407.50,472.80 425.10,432.30 442.70,452.50 460.30,452.50 477.90,452.50 495.50,472.80 513.10,452.50 530.70,432.30 548.30,452.50 565.90,452.50" fill="none" stroke="#8ab8ff" stroke-width="1" stroke-linejoin="round"/>
<polyline points="52.00,594.40 565.90,594.40" fill="none" stroke="#ff780a" stroke-width="1" stroke-linejoin="round"/>
<path d="M863.5 415V548M925.5 415V548M988.5 415V548M1050.5 415V548M1112.5 415V548M1174.5 415V548M1237.5 415V548M1299.5 415V548M1361.5 415V548M1423.5 415V548M1486.5 415V548M1548.5 415V548" stroke="#f0faff" stroke-opacity="0.09" stroke-width="1" fill="none" shape-rendering="crispEdges"/>
<path d="M855 415.5H1607M855 448.5H1607M855 481.5H1607M855 514.5H1607M855 547.5H1607" stroke="#f0faff" stroke-opacity="0.09" stroke-width="1" fill="none" shape-rendering="crispEdges"/>
<path d="M859.5 547.6H1585.7" stroke="#73bf69" stroke-opacity="0.6" stroke-width="1" fill="none"/>
<path d="M76.5 681V864M184.5 681V864M291.5 681V864M399.5 681V864M506.5 681V864M614.5 681V864M721.5 681V864M829.5 681V864M936.5 681V864M1044.5 681V864M1152.5 681V864M1259.5 681V864" stroke="#f0faff" stroke-opacity="0.09" stroke-width="1" fill="none" shape-rendering="crispEdges"/>
<path d="M65 707.5H1360M65 739.5H1360M65 771.5H1360M65 802.5H1360M65 834.5H1360" stroke="#f0faff" stroke-opacity="0.09" stroke-width="1" fill="none" shape-rendering="crispEdges"/>
<polygon points="69.30,709.40 76.50,709.40 119.53,710.40 162.56,709.40 205.59,709.40 248.62,710.40 291.65,709.40 334.68,710.40 377.71,709.40 420.74,709.40 463.77,710.40 506.80,709.40 549.83,710.40 592.86,709.40 635.89,709.40 678.92,710.40 721.95,709.40 764.98,710.40 808.01,709.40 851.04,709.20 894.07,706.30 937.10,709.60 980.13,710.40 1023.16,709.40 1066.19,709.40 1109.22,710.40 1152.25,709.30 1195.28,707.30 1238.31,705.60 1281.34,709.20 1324.37,710.40 1324.37,771.20 69.30,771.20" fill="#73bf69" fill-opacity="0.1"/>
<polyline points="69.30,709.40 76.50,709.40 119.53,710.40 162.56,709.40 205.59,709.40 248.62,710.40 291.65,709.40 334.68,710.40 377.71,709.40 420.74,709.40 463.77,710.40 506.80,709.40 549.83,710.40 592.86,709.40 635.89,709.40 678.92,710.40 721.95,709.40 764.98,710.40 808.01,709.40 851.04,709.20 894.07,706.30 937.10,709.60 980.13,710.40 1023.16,709.40 1066.19,709.40 1109.22,710.40 1152.25,709.30 1195.28,707.30 1238.31,705.60 1281.34,709.20 1324.37,710.40" fill="none" stroke="#73bf69" stroke-width="1" stroke-linejoin="round"/>
<polygon points="69.30,832.40 76.50,832.40 119.53,832.40 162.56,832.40 205.59,832.40 248.62,832.40 291.65,833.50 334.68,831.40 377.71,832.40 420.74,832.40 463.77,832.40 506.80,832.40 549.83,831.40 592.86,833.50 635.89,832.40 678.92,832.40 721.95,833.50 764.98,831.40 808.01,832.40 851.04,832.40 894.07,835.50 937.10,832.40 980.13,832.40 1023.16,832.40 1066.19,832.40 1109.22,832.40 1152.25,832.40 1195.28,835.20 1238.31,836.60 1281.34,832.50 1324.37,832.50 1324.37,771.20 69.30,771.20" fill="#f2cc0c" fill-opacity="0.1"/>
<polyline points="69.30,832.40 76.50,832.40 119.53,832.40 162.56,832.40 205.59,832.40 248.62,832.40 291.65,833.50 334.68,831.40 377.71,832.40 420.74,832.40 463.77,832.40 506.80,832.40 549.83,831.40 592.86,833.50 635.89,832.40 678.92,832.40 721.95,833.50 764.98,831.40 808.01,832.40 851.04,832.40 894.07,835.50 937.10,832.40 980.13,832.40 1023.16,832.40 1066.19,832.40 1109.22,832.40 1152.25,832.40 1195.28,835.20 1238.31,836.60 1281.34,832.50 1324.37,832.50" fill="none" stroke="#f2cc0c" stroke-width="1" stroke-linejoin="round"/>
<polyline points="69.30,772.00 1324.50,772.00" fill="none" stroke="#8ab8ff" stroke-width="1" stroke-linejoin="round"/>
<polyline points="69.30,771.30 1324.50,771.30" fill="none" stroke="#ff780a" stroke-width="1" stroke-linejoin="round"/>
<polyline points="69.30,772.40 76.50,772.70 119.53,772.30 162.56,771.90 205.59,772.30 248.62,772.70 291.65,772.30 334.68,771.90 377.71,772.30 420.74,772.70 463.77,772.30 506.80,772.70 549.83,772.30 592.86,771.90 635.89,772.70 678.92,772.30 721.95,772.70 764.98,772.30 808.01,771.90 851.04,772.70 894.07,772.30 937.10,771.90 980.13,772.30 1023.16,772.70 1066.19,772.30 1109.22,771.90 1152.25,772.70 1195.28,772.30 1238.31,772.70 1281.34,772.30 1324.37,771.90" fill="none" stroke="#f2495c" stroke-width="1" stroke-linejoin="round"/>
<path d="M46.5 985V1168M161.5 985V1168M276.5 985V1168M390.5 985V1168M505.5 985V1168M620.5 985V1168M734.5 985V1168M849.5 985V1168M963.5 985V1168M1078.5 985V1168M1193.5 985V1168M1307.5 985V1168" stroke="#f0faff" stroke-opacity="0.09" stroke-width="1" fill="none" shape-rendering="crispEdges"/>
<path d="M35 1002.5H1415M35 1039.5H1415M35 1075.5H1415M35 1112.5H1415M35 1149.5H1415" stroke="#f0faff" stroke-opacity="0.09" stroke-width="1" fill="none" shape-rendering="crispEdges"/>
<polygon points="39.30,1007.40 46.50,1007.40 92.37,1007.40 138.24,1007.40 184.11,1007.40 229.98,1006.30 275.85,1006.30 321.72,1007.40 367.59,1007.40 413.46,1007.40 459.33,1007.40 505.20,1005.30 551.07,1003.30 596.94,1003.30 642.81,1004.30 688.68,1005.30 734.55,1006.40 780.42,1006.40 826.29,1006.40 872.16,1006.40 918.03,1002.30 963.90,1006.40 1009.77,1006.40 1055.64,1006.40 1101.51,1006.40 1147.38,1006.40 1193.25,1005.30 1239.12,1000.40 1284.99,1000.40 1330.86,1004.30 1376.73,1005.30 1376.73,1075.50 39.30,1075.50" fill="#73bf69" fill-opacity="0.1"/>
<polyline points="39.30,1007.40 46.50,1007.40 92.37,1007.40 138.24,1007.40 184.11,1007.40 229.98,1006.30 275.85,1006.30 321.72,1007.40 367.59,1007.40 413.46,1007.40 459.33,1007.40 505.20,1005.30 551.07,1003.30 596.94,1003.30 642.81,1004.30 688.68,1005.30 734.55,1006.40 780.42,1006.40 826.29,1006.40 872.16,1006.40 918.03,1002.30 963.90,1006.40 1009.77,1006.40 1055.64,1006.40 1101.51,1006.40 1147.38,1006.40 1193.25,1005.30 1239.12,1000.40 1284.99,1000.40 1330.86,1004.30 1376.73,1005.30" fill="none" stroke="#73bf69" stroke-width="1" stroke-linejoin="round"/>
<polygon points="39.30,1144.50 46.50,1144.50 92.37,1144.50 138.24,1144.50 184.11,1144.50 229.98,1144.50 275.85,1144.50 321.72,1144.50 367.59,1144.50 413.46,1144.50 459.33,1144.50 505.20,1145.30 551.07,1148.50 596.94,1147.50 642.81,1146.50 688.68,1145.50 734.55,1145.30 780.42,1145.30 826.29,1145.30 872.16,1145.30 918.03,1149.50 963.90,1145.30 1009.77,1145.30 1055.64,1145.30 1101.51,1145.30 1147.38,1145.30 1193.25,1145.30 1239.12,1149.30 1284.99,1149.50 1330.86,1145.30 1376.73,1145.30 1376.73,1075.50 39.30,1075.50" fill="#f2cc0c" fill-opacity="0.1"/>
<polyline points="39.30,1144.50 46.50,1144.50 92.37,1144.50 138.24,1144.50 184.11,1144.50 229.98,1144.50 275.85,1144.50 321.72,1144.50 367.59,1144.50 413.46,1144.50 459.33,1144.50 505.20,1145.30 551.07,1148.50 596.94,1147.50 642.81,1146.50 688.68,1145.50 734.55,1145.30 780.42,1145.30 826.29,1145.30 872.16,1145.30 918.03,1149.50 963.90,1145.30 1009.77,1145.30 1055.64,1145.30 1101.51,1145.30 1147.38,1145.30 1193.25,1145.30 1239.12,1149.30 1284.99,1149.50 1330.86,1145.30 1376.73,1145.30" fill="none" stroke="#f2cc0c" stroke-width="1" stroke-linejoin="round"/>
<polyline points="39.30,1075.50 1376.80,1075.50" fill="none" stroke="#8ab8ff" stroke-width="1" stroke-linejoin="round"/>
<polyline points="39.30,1075.40 1376.80,1075.40" fill="none" stroke="#ff780a" stroke-width="1" stroke-linejoin="round"/>
</svg>
<div style="position:absolute;left:1631px;top:770px;width:8px;height:263px;border-radius:4px;background:#35363c"></div>
<div style="position:absolute;left:1639px;top:216px;width:1px;height:1px;background:#b07a5a"></div><div style="position:absolute;left:1639px;top:235px;width:1px;height:1px;background:#b07a5a"></div><div style="position:absolute;left:1639px;top:224px;width:1px;height:8px;background:#2d5a78"></div>
<div style="position:absolute;left:0;top:1277px;width:1640px;height:1px;background:#2a6f90"></div>
</body></html>
